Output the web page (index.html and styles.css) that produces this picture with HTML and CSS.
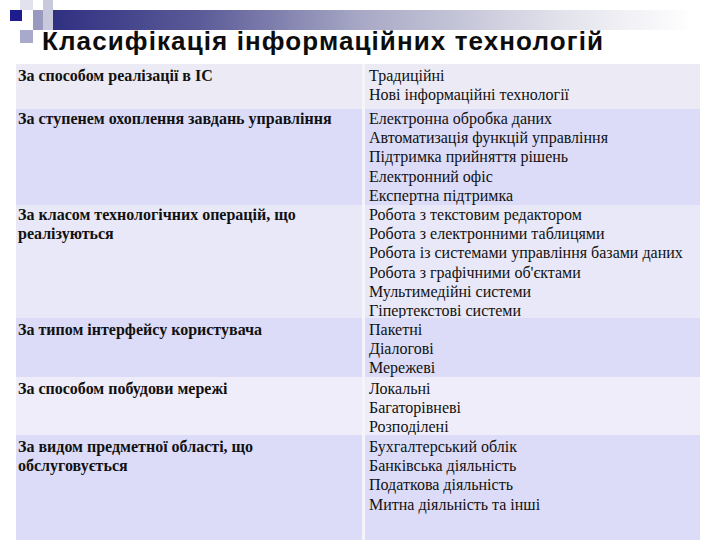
FILE: index.html
```html
<!DOCTYPE html>
<html lang="uk">
<head>
<meta charset="utf-8">
<link rel="stylesheet" href="styles.css">
</head>
<body>
<div class="slide">
  <svg class="deco" width="720" height="50" viewBox="0 0 720 50" aria-hidden="true">
    <defs>
      <linearGradient id="bar" x1="0" y1="0" x2="1" y2="0">
        <stop offset="0" stop-color="#2a2a7e"/>
        <stop offset="0.25" stop-color="#5a5a98"/>
        <stop offset="0.5" stop-color="#a9a9c6"/>
        <stop offset="0.8" stop-color="#e2e2ec"/>
        <stop offset="1" stop-color="#ffffff"/>
      </linearGradient>
    </defs>
    <rect x="33" y="10" width="660" height="20" fill="url(#bar)"/>
    <rect x="33" y="10" width="20" height="20" fill="#9a9ac0"/>
    <rect x="43" y="0" width="10" height="30" fill="#c9c9dd"/>
    <rect x="20" y="30" width="13" height="13" fill="#a9a9cb"/>
    <rect x="20" y="0" width="13" height="10" fill="#e2e2ee"/>
    <rect x="10" y="10" width="12" height="11" fill="#1c1c8e"/>
  </svg>
  <h1 class="title">Класифікація інформаційних технологій</h1>
  <div class="table">
    <div class="row r1">
      <div class="cell key">За способом реалізації в ІС</div>
      <div class="cell val">Традиційні<br>Нові інформаційні технології</div>
    </div>
    <div class="row r2 tight">
      <div class="cell key">За ступенем охоплення завдань управління</div>
      <div class="cell val">Електронна обробка даних<br>Автоматизація функцій управління<br>Підтримка прийняття рішень<br>Електронний офіс<br>Експертна підтримка</div>
    </div>
    <div class="row r3 tight">
      <div class="cell key">За класом технологічних операцій, що реалізуються</div>
      <div class="cell val">Робота з текстовим редактором<br>Робота з електронними таблицями<br>Робота із системами управління базами даних<br>Робота з графічними об'єктами<br>Мультимедійні системи<br>Гіпертекстові системи</div>
    </div>
    <div class="row r4">
      <div class="cell key">За типом інтерфейсу користувача</div>
      <div class="cell val">Пакетні<br>Діалогові<br>Мережеві</div>
    </div>
    <div class="row r5">
      <div class="cell key">За способом побудови мережі</div>
      <div class="cell val">Локальні<br>Багаторівневі<br>Розподілені</div>
    </div>
    <div class="row r6">
      <div class="cell key">За видом предметної області, що обслуговується</div>
      <div class="cell val">Бухгалтерський облік<br>Банківська діяльність<br>Податкова діяльність<br>Митна діяльність та інші</div>
    </div>
  </div>
</div>
</body>
</html>
```
FILE: styles.css
```css
html, body {
  margin: 0;
  padding: 0;
  background: #ffffff;
}
.slide {
  position: relative;
  width: 720px;
  height: 540px;
  overflow: hidden;
  background: #ffffff;
}
.deco {
  position: absolute;
  left: 0;
  top: 0;
}
.title {
  position: relative;
  margin: 0;
  padding: 26px 0 0 42px;
  height: 38px;
  font-family: "Liberation Sans", Arial, sans-serif;
  font-weight: bold;
  font-size: 26px;
  letter-spacing: 1.1px;
  line-height: 30px;
  color: #0d0d0d;
  white-space: nowrap;
}
.table {
  margin-left: 16px;
  width: 684px;
  display: flex;
  flex-direction: column;
  gap: 1px;
  background: #f4f4f9;
  height: 476px;
}
.row {
  display: grid;
  grid-template-columns: 346px 335px;
  column-gap: 3px;
  background: #f4f4f9;
}
.r1 { height: 45px; }
.r2 { height: 95px; }
.r3 { height: 111px; }
.r4 { height: 58px; }
.r5 { height: 57px; }
.r6 { flex: 1; }
.cell {
  font-family: "Liberation Serif", "Times New Roman", serif;
  font-size: 16px;
  line-height: 19.2px;
  color: #111111;
  padding-top: 2px;
}
.tight .cell { padding-top: 0; margin-top: -1px; }
.key {
  font-weight: bold;
  padding-left: 2px;
  padding-right: 14px;
}
.val {
  padding-left: 4px;
}
.r1 .cell { background: #ebeaf5; }
.r2 .cell { background: #dcdcf8; }
.r3 .cell { background: #e8e8f8; }
.r4 .cell { background: #dcdcf8; }
.r5 .cell { background: #eeedf9; }
.r6 .cell { background: #dcdcf8; }
```
